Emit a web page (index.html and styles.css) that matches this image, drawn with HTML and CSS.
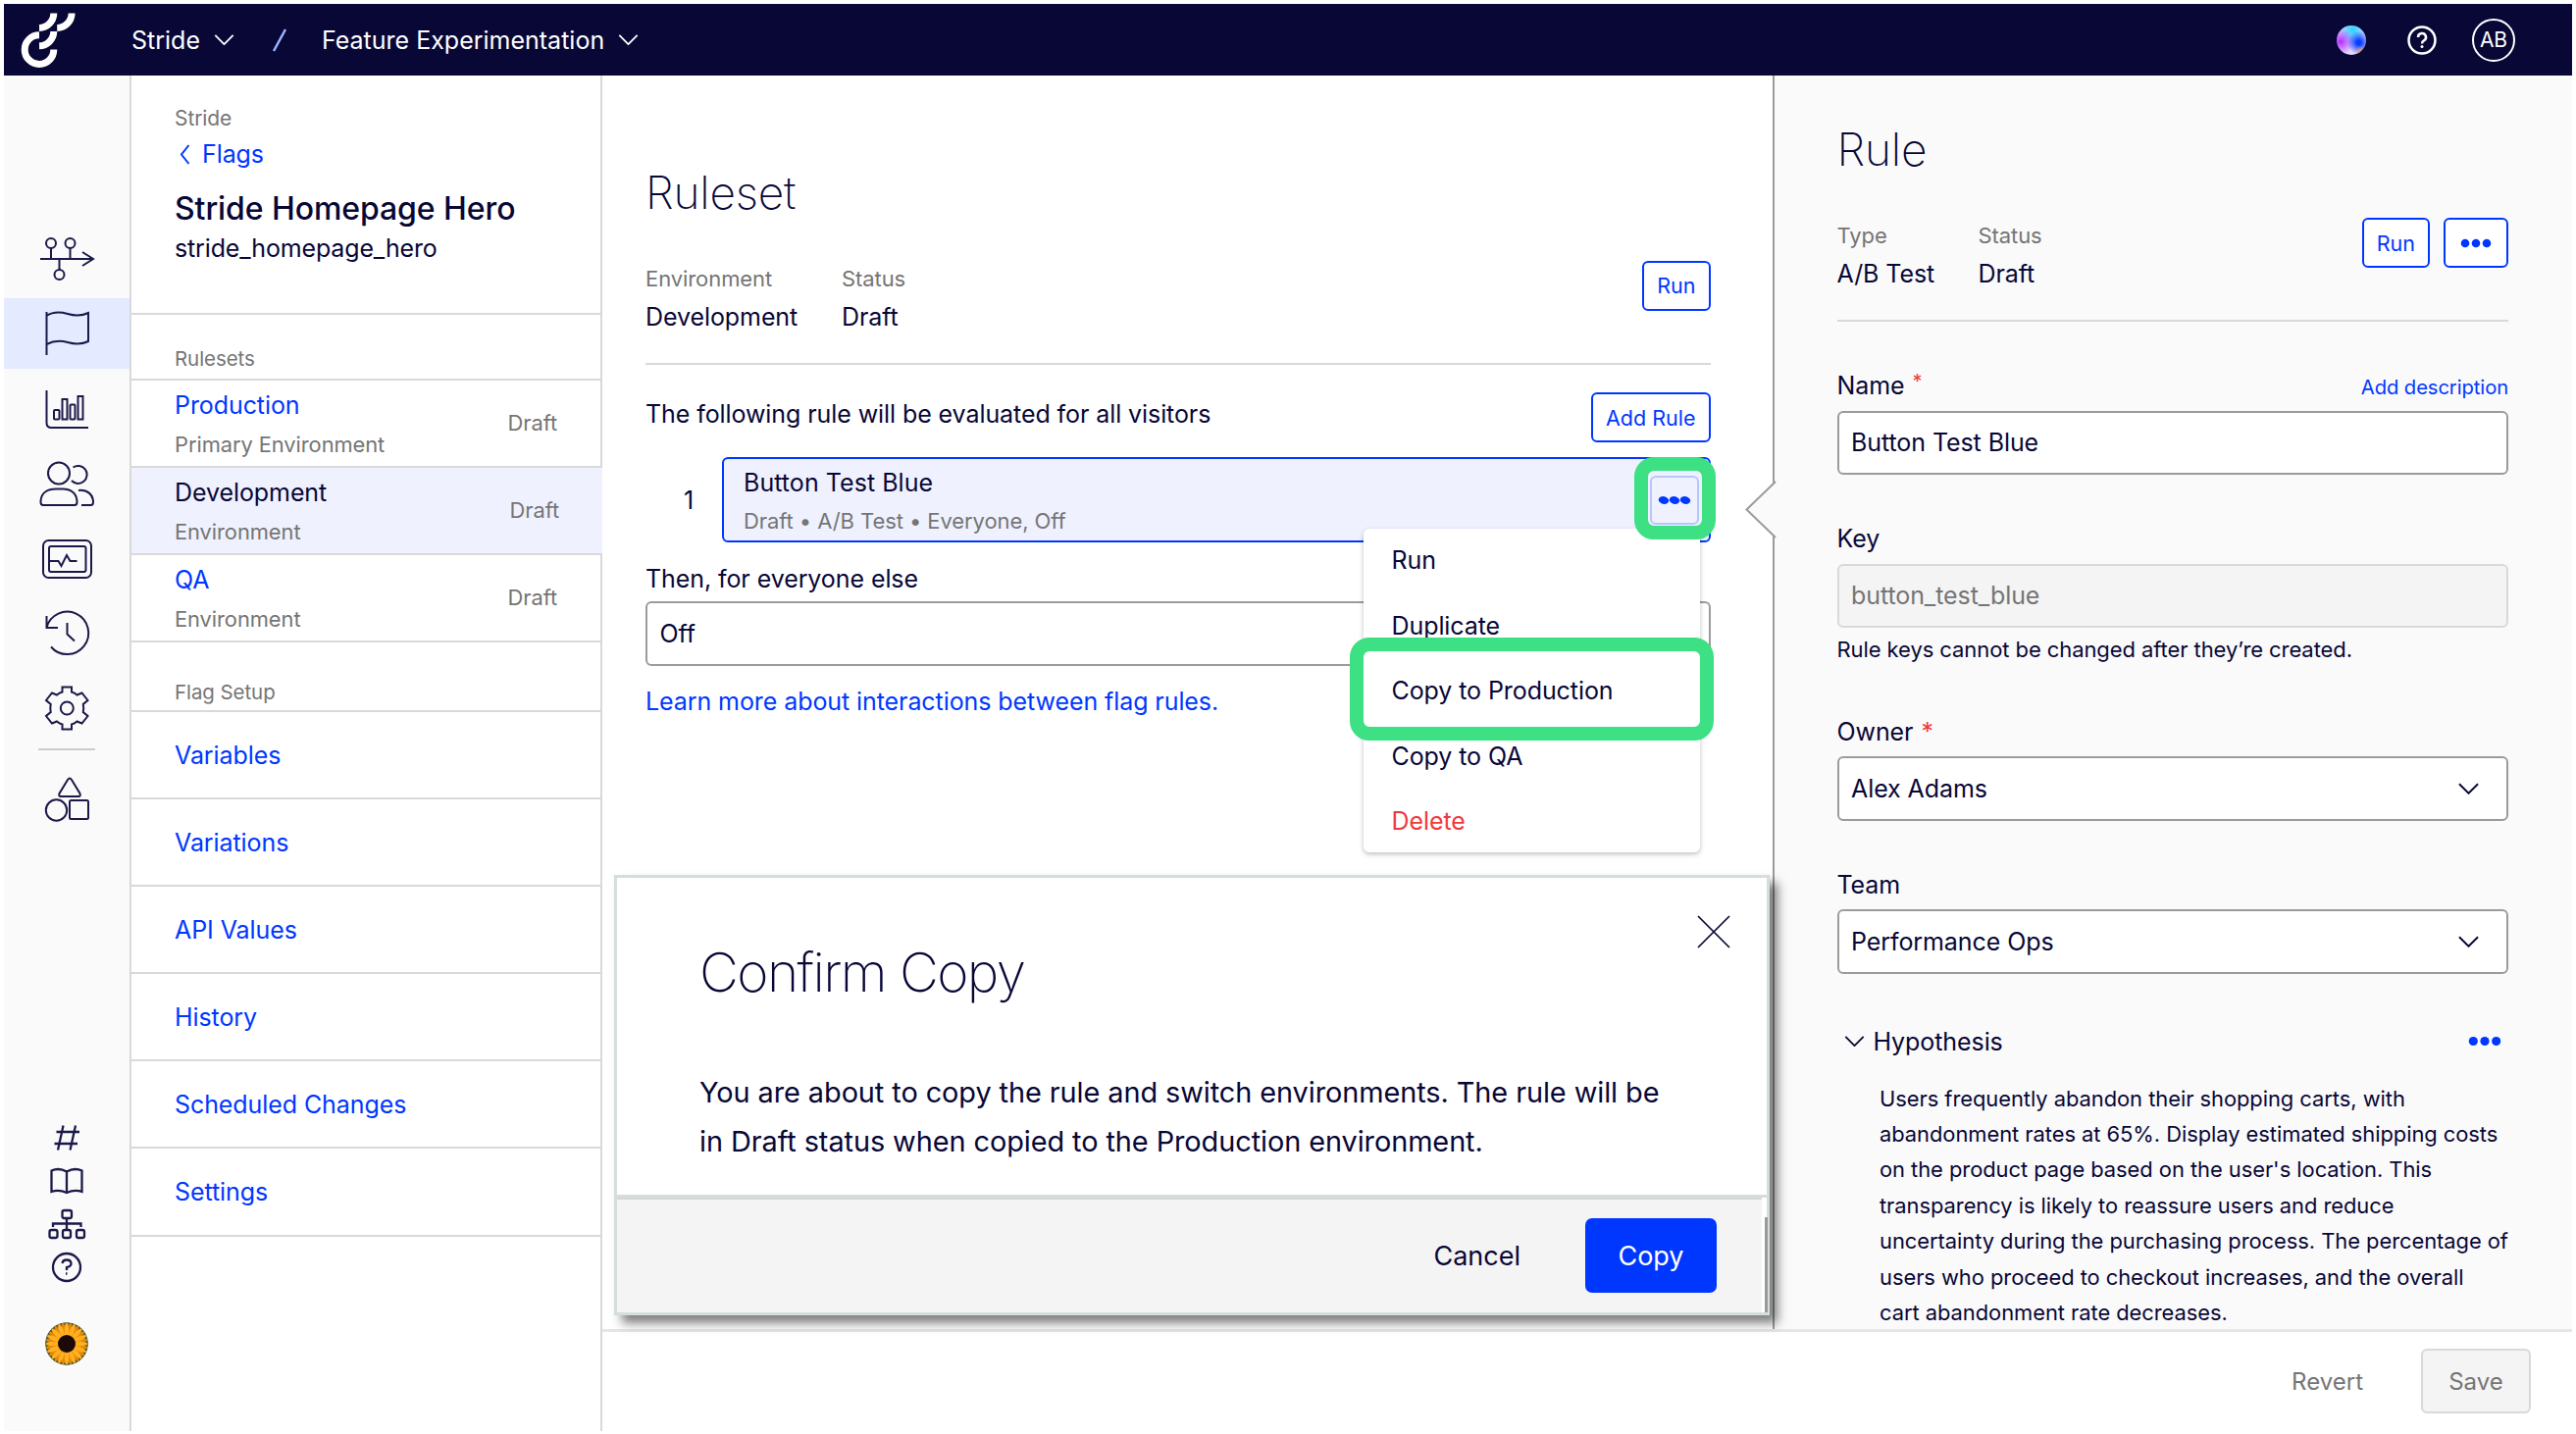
FILE: index.html
```html
<!DOCTYPE html>
<html lang="en">
<head>
    <meta charset="UTF-8">
    <meta name="viewport" content="width=device-width, initial-scale=1.0">
    <title>Stride Homepage Hero - Feature Experimentation</title>
    <link rel="stylesheet" href="styles.css">
</head>
<body>
    <!-- Shared icons -->
    <svg class="sprite" width="0" height="0">
        <symbol id="chevron" viewBox="0 0 22 12"><path d="M1 1 L11 11 L21 1"/></symbol>
        <symbol id="dots" viewBox="0 0 32 10"><circle cx="5" cy="5" r="4.3"/><circle cx="16" cy="5" r="4.3"/><circle cx="27" cy="5" r="4.3"/></symbol>
        <symbol id="petals" viewBox="-22 -22 44 44">
            <g id="petal4">
                <ellipse cx="0" cy="-14" rx="2.2" ry="7.5"/>
                <ellipse cx="0" cy="14" rx="2.2" ry="7.5"/>
                <ellipse cx="-14" cy="0" rx="7.5" ry="2.2"/>
                <ellipse cx="14" cy="0" rx="7.5" ry="2.2"/>
            </g>
            <use href="#petal4" transform="rotate(22.5)"/>
            <use href="#petal4" transform="rotate(45)"/>
            <use href="#petal4" transform="rotate(67.5)"/>
        </symbol>
    </svg>

    <div class="app">
        <header class="topbar">
            <svg class="logo" width="56" height="56" viewBox="20.5 12.2 56 56">
                <path d="M54.3 12.7 A15 15 0 0 1 39.5 27.6 M72.6 12.7 A15 15 0 0 1 57.7 27.6 M54.3 31.2 A15 15 0 0 1 39.5 46 M39.5 35 A14.8 14.8 0 1 0 54.3 49.7"/>
            </svg>
            <div class="crumb crumb-project">Stride <svg class="chevron" width="21" height="11"><use href="#chevron"/></svg></div>
            <svg class="slash" width="16" height="24" viewBox="0 0 16 24"><path d="M2 23 L14 1"/></svg>
            <div class="crumb">Feature Experimentation <svg class="chevron" width="21" height="11"><use href="#chevron"/></svg></div>
            <div class="topbar-right">
                <span class="orb"></span>
                <svg class="help" width="30" height="30" viewBox="0 0 30 30"><circle cx="15" cy="15" r="13.5"/><path d="M11 12 a4 4 0 1 1 6 3.4 q-2 1.1 -2 3"/><circle class="dot" cx="15" cy="21.5" r="1.5"/></svg>
                <span class="avatar">AB</span>
            </div>
        </header>

        <div class="layout">
            <!-- Icon rail -->
            <aside class="rail">
                <div class="rail-item">
                    <svg width="60" height="60" viewBox="0 0 60 60"><path d="M3 30 H57 M46 23 L57 30 L46 37 M14 19 V30 M33.5 19 V30 M22.5 30 V41"/><circle cx="14" cy="14" r="5"/><circle cx="33.5" cy="14" r="5"/><circle cx="22.5" cy="46" r="5"/></svg>
                </div>
                <div class="rail-item active">
                    <svg width="60" height="60" viewBox="0 0 60 60"><path d="M9.5 8 V52 M9.5 12 C17 7 24 8 31 10 C38 12 46 12 52 9 V38 C46 41 38 41 31 39 C24 37 17 37 9.5 41"/></svg>
                </div>
                <div class="rail-item">
                    <svg width="60" height="60" viewBox="0 0 60 60"><path d="M9.5 11 V44 Q9.5 49 14.5 49 H52"/><rect x="17" y="31" width="5.5" height="9.5" rx="1"/><rect x="25.5" y="20" width="5" height="20.5"/><rect x="33.5" y="25.5" width="5" height="15" rx="1"/><rect x="41.5" y="17" width="5" height="23.5"/></svg>
                </div>
                <div class="rail-item">
                    <svg width="60" height="60" viewBox="0 0 60 60"><circle cx="22" cy="19.5" r="11"/><path d="M6 52 H38 Q40.5 52 40.5 49 C40.5 39 33 35.5 26 35.5 H19 C11 35.5 3.5 39 3.5 49 Q3.5 52 6 52 Z M36.5 13.5 A9 9 0 1 1 35 27 M42 37 C51 36 57 41 57 49 Q57 52 54.5 52 H45"/></svg>
                </div>
                <div class="rail-item">
                    <svg width="60" height="60" viewBox="0 0 60 60"><rect x="6" y="11" width="49" height="38" rx="5.5"/><rect x="12" y="17" width="37.5" height="26" rx="2"/><path d="M12 32 H21.5 L24.5 37 L30 26 L33.5 32 H40.5"/></svg>
                </div>
                <div class="rail-item">
                    <svg width="60" height="60" viewBox="0 0 60 60"><path d="M9.5 12 V24 H21 M9.5 24 A21.7 21.7 0 1 1 14 43.5 M30.5 19 V30.5 L38 37.5"/></svg>
                </div>
                <div class="rail-item">
                    <svg width="60" height="60" viewBox="0 0 60 60"><path d="M25.5 8.5 H35 V13.5 Q38 14.4 40.5 16.5 L45.5 14.5 L51.5 22 L46.8 26 Q47.6 30 46.8 34 L51.5 38 L45.5 45.5 L40.5 43.5 Q38 45.6 35 46.5 V51.5 H25.5 V46.5 Q22.5 45.6 20 43.5 L15 45.5 L9 38 L13.7 34 Q12.9 30 13.7 26 L9 22 L15 14.5 L20 16.5 Q22.5 14.4 25.5 13.5 Z"/><circle cx="30.3" cy="30" r="6.5"/></svg>
                </div>
                <div class="rail-divider"></div>
                <div class="rail-item rail-item-shapes">
                    <svg width="60" height="60" viewBox="0 0 60 60"><path d="M31 11 Q33 8 35 11 L43.5 25 Q44.5 28 42 28 H24 Q21.5 28 22.5 25 Z"/><circle cx="19.5" cy="42" r="10.7"/><rect x="33" y="32" width="19" height="19" rx="1.5"/></svg>
                </div>

                <div class="rail-bottom">
                    <svg width="44" height="44" viewBox="0 0 44 44"><path d="M18.5 9.5 L13 34.5 M31 9.5 L25.5 34.5 M11.5 16 H35 M9.5 28 H33"/></svg>
                    <svg width="44" height="44" viewBox="0 0 44 44"><path d="M22 12.5 Q14 8 6.5 11.5 V33 Q14 30.5 22 34 Q30 30.5 37.5 33 V11.5 Q30 8 22 12.5 V34"/></svg>
                    <svg width="44" height="44" viewBox="0 0 44 44"><rect x="17.5" y="8" width="9.5" height="8" rx="2"/><path d="M22 16 V28 M8 25 V21.5 H36.5 V25"/><rect x="4.5" y="28" width="8" height="8" rx="2"/><rect x="18" y="28" width="8" height="8" rx="2"/><rect x="32" y="28" width="8" height="8" rx="2"/></svg>
                    <svg width="44" height="44" viewBox="0 0 44 44"><circle cx="22" cy="22" r="14"/><path d="M17.5 18 Q18 14.5 22 14.5 Q26.5 14.5 26.5 18.5 Q26.5 21 22 22 V25"/><path d="M21 28.5 h1.5"/></svg>
                </div>
                <svg class="sunflower" width="44" height="44" viewBox="-22 -22 44 44">
                    <circle class="leaf" r="22"/>
                    <circle class="ground" r="15"/>
                    <use href="#petals" class="petals-back" x="-22" y="-22" width="44" height="44" transform="rotate(11)"/>
                    <use href="#petals" class="petals-front" x="-22" y="-22" width="44" height="44"/>
                    <circle class="seed" r="9"/>
                </svg>
            </aside>

            <!-- Flag navigation -->
            <nav class="sidenav">
                <div class="flag-header">
                    <div class="project">Stride</div>
                    <a class="back"><svg width="11" height="21" viewBox="0 0 11 21"><path d="M9.5 1 L2 10.5 L9.5 20"/></svg>Flags</a>
                    <h2>Stride Homepage Hero</h2>
                    <div class="slug">stride_homepage_hero</div>
                </div>
                <div class="nav-label">Rulesets</div>
                <div class="nav-env">
                    <div><a>Production</a><span class="sub">Primary Environment</span></div>
                    <span class="state">Draft</span>
                </div>
                <div class="nav-env selected">
                    <div><a>Development</a><span class="sub">Environment</span></div>
                    <span class="state">Draft</span>
                </div>
                <div class="nav-env">
                    <div><a>QA</a><span class="sub">Environment</span></div>
                    <span class="state">Draft</span>
                </div>
                <div class="nav-label nav-label-setup">Flag Setup</div>
                <a class="nav-link">Variables</a>
                <a class="nav-link">Variations</a>
                <a class="nav-link">API Values</a>
                <a class="nav-link">History</a>
                <a class="nav-link">Scheduled Changes</a>
                <a class="nav-link">Settings</a>
            </nav>

            <div class="workspace">
                <div class="columns">
                    <main class="ruleset">
                        <h1>Ruleset</h1>
                        <div class="meta">
                            <div class="meta-col"><span class="meta-label">Environment</span><span class="meta-value">Development</span></div>
                            <div class="meta-col"><span class="meta-label">Status</span><span class="meta-value">Draft</span></div>
                            <button class="btn-outline">Run</button>
                        </div>
                        <div class="rules-head">
                            <p>The following rule will be evaluated for all visitors</p>
                            <button class="btn-outline">Add Rule</button>
                        </div>
                        <div class="rule-row">
                            <span class="rule-number">1</span>
                            <div class="rule-card">
                                <div class="rule-name">Button Test Blue</div>
                                <div class="rule-info">Draft • A/B Test • Everyone, Off</div>
                                <button class="rule-more">
                                    <svg width="34" height="12" viewBox="0 0 34 12"><ellipse cx="6" cy="6" rx="5.3" ry="3.8" transform="rotate(12 6 6)"/><ellipse cx="17" cy="6" rx="5.3" ry="3.8" transform="rotate(12 17 6)"/><ellipse cx="28" cy="6" rx="5.3" ry="3.8" transform="rotate(12 28 6)"/></svg>
                                </button>
                                <div class="menu">
                                    <div class="menu-item">Run</div>
                                    <div class="menu-item">Duplicate</div>
                                    <div class="menu-item">Copy to Production</div>
                                    <div class="menu-item">Copy to QA</div>
                                    <div class="menu-item danger">Delete</div>
                                </div>
                                <div class="highlight highlight-more"></div>
                                <div class="highlight highlight-copy"></div>
                            </div>
                        </div>
                        <p class="else-label">Then, for everyone else</p>
                        <div class="field else-field">Off</div>
                        <a class="learn">Learn more about interactions between flag rules.</a>
                    </main>

                    <section class="rule-panel">
                        <svg class="notch" width="32" height="60" viewBox="0 0 32 60"><path d="M31 1 L1.5 29.5 L31 58"/></svg>
                        <h1>Rule</h1>
                        <div class="meta">
                            <div class="meta-col"><span class="meta-label">Type</span><span class="meta-value">A/B Test</span></div>
                            <div class="meta-col"><span class="meta-label">Status</span><span class="meta-value">Draft</span></div>
                            <button class="btn-outline">Run</button>
                            <button class="btn-outline btn-dots"><svg width="32" height="10"><use href="#dots"/></svg></button>
                        </div>

                        <div class="form-group">
                            <label>Name <sup>*</sup><a class="add-description">Add description</a></label>
                            <div class="field">Button Test Blue</div>
                        </div>
                        <div class="form-group">
                            <label>Key</label>
                            <div class="field disabled">button_test_blue</div>
                            <div class="hint">Rule keys cannot be changed after they’re created.</div>
                        </div>
                        <div class="form-group owner">
                            <label>Owner <span class="star">*</span></label>
                            <div class="field">Alex Adams <svg class="chevron" width="21" height="12"><use href="#chevron"/></svg></div>
                        </div>
                        <div class="form-group">
                            <label>Team</label>
                            <div class="field">Performance Ops <svg class="chevron" width="21" height="12"><use href="#chevron"/></svg></div>
                        </div>

                        <div class="hypothesis-head">
                            <svg class="chevron" width="21" height="11"><use href="#chevron"/></svg>
                            <span>Hypothesis</span>
                            <svg class="dots" width="34" height="11"><use href="#dots"/></svg>
                        </div>
                        <p class="hypothesis">Users frequently abandon their shopping carts, with<br>
                            abandonment rates at 65%. Display estimated shipping costs<br>
                            on the product page based on the user's location. This<br>
                            transparency is likely to reassure users and reduce<br>
                            uncertainty during the purchasing process. The percentage of<br>
                            users who proceed to checkout increases, and the overall<br>
                            cart abandonment rate decreases.</p>
                    </section>
                </div>

                <footer class="savebar">
                    <button class="btn-plain">Revert</button>
                    <button class="btn-save">Save</button>
                </footer>
            </div>
        </div>

        <!-- Copy confirmation -->
        <div class="dialog">
            <div class="dialog-body">
                <svg class="close" width="34" height="34" viewBox="0 0 34 34"><path d="M1 1 L33 33 M33 1 L1 33"/></svg>
                <h1>Confirm Copy</h1>
                <p>You are about to copy the rule and switch environments. The rule will be<br>in Draft status when copied to the Production environment.</p>
            </div>
            <div class="dialog-footer">
                <button class="btn-cancel">Cancel</button>
                <button class="btn-primary">Copy</button>
                <span class="dialog-scroll"></span>
            </div>
        </div>
    </div>
</body>
</html>
```

FILE: styles.css
```css
:root {
    --navy: #080736;
    --blue: #0037ff;
    --grey: #757575;
    --line: #d9d9d9;
    --field-line: #9b9b9b;
    --panel: #fafafa;
    --selected: #eff1fe;
    --green: #3de083;
    --red: #f03a3a;
}

* {
    box-sizing: border-box;
}

body {
    margin: 0;
    background: #fff;
    color: var(--navy);
    font-family: Inter, 'Liberation Sans', sans-serif;
    font-size: 25px;
    letter-spacing: -0.08px;
    overflow: hidden;
}

h1, h2, p {
    margin: 0;
}

h1 {
    font-size: 46px;
    font-weight: 250;
    letter-spacing: -0.2px;
    line-height: 60px;
}

a {
    color: var(--blue);
    text-decoration: none;
}

button {
    font-family: inherit;
    padding: 0;
    color: inherit;
}

svg {
    display: block;
    fill: none;
    flex: none;
}

.sprite {
    position: absolute;
}

.app {
    position: relative;
    display: flex;
    flex-direction: column;
    width: 2618px;
    height: 1455px;
    margin: 4px;
}

/* Top bar */
.topbar {
    display: flex;
    align-items: center;
    height: 73px;
    padding: 0 58px 0 17px;
    background: var(--navy);
    color: #fff;
    flex: none;
}

.logo {
    stroke: #fff;
    stroke-width: 7;
    margin-right: 57px;
}

.crumb {
    display: flex;
    align-items: center;
    gap: 14px;
    letter-spacing: 0;
}

.crumb-project {
    margin-right: 38px;
}

.chevron {
    stroke: var(--navy);
    stroke-width: 2;
}

.crumb .chevron {
    stroke: #fff;
}

.slash {
    stroke: #9db4ff;
    stroke-width: 2.5;
    margin-right: 35px;
}

.topbar-right {
    display: flex;
    align-items: center;
    margin-left: auto;
}

.orb {
    width: 30px;
    height: 30px;
    border-radius: 50%;
    margin-right: 42px;
    background:
        radial-gradient(circle at 85% 92%, #ff9a3c 0, transparent 18%),
        radial-gradient(circle at 75% 58%, #0a3cff 0 8%, transparent 42%),
        radial-gradient(circle at 14% 55%, #b42cff 0, transparent 45%),
        radial-gradient(circle at 55% 15%, #27d3ff 0, transparent 50%),
        #e6d9ff;
}

.help {
    stroke: #fff;
    stroke-width: 2.5;
    margin-right: 36px;
}

.help .dot {
    fill: #fff;
    stroke: none;
}

.avatar {
    width: 44px;
    height: 44px;
    border: 2.5px solid #fff;
    border-radius: 50%;
    font-size: 21px;
    line-height: 39px;
    text-align: center;
}

.layout {
    display: flex;
    flex: 1;
    min-height: 0;
}

/* Icon rail */
.rail {
    display: flex;
    flex-direction: column;
    align-items: center;
    width: 130px;
    padding-top: 151px;
    border-right: 2px solid var(--line);
    background: var(--panel);
    flex: none;
}

.rail svg {
    stroke: #1b1949;
    stroke-width: 2;
}

.rail-item {
    display: flex;
    align-items: center;
    justify-content: center;
    width: 100%;
    height: 72px;
    margin-bottom: 4.4px;
    flex: none;
}

.rail-item.active {
    background: #e4eaff;
}

.rail-divider {
    width: 58px;
    height: 2px;
    background: #ccc;
}

.rail-item-shapes {
    margin: 13px 0 0;
}

.rail-bottom {
    margin-top: 288px;
}

.rail .rail-bottom svg {
    stroke-width: 2.3;
}

.rail .sunflower {
    margin-top: 34px;
    border-radius: 50%;
    stroke: none;
}

.leaf { fill: #4d5a35; }
.ground { fill: #e07c00; }
.petals-back { fill: #e88608; }
.petals-front { fill: #ffb01e; }
.seed { fill: #1d0a08; }

/* Flag navigation */
.sidenav {
    width: 480px;
    border-right: 2px solid var(--line);
    flex: none;
}

.flag-header {
    height: 244px;
    padding: 29px 0 0 44px;
    border-bottom: 2px solid var(--line);
}

.project {
    color: var(--grey);
    font-size: 21px;
    line-height: 30px;
}

.back {
    display: flex;
    align-items: center;
    gap: 12px;
    padding-left: 5px;
    line-height: 43px;
}

.back svg {
    stroke: var(--blue);
    stroke-width: 2;
}

.flag-header h2 {
    margin-top: 10px;
    font-size: 32px;
    font-weight: 500;
    line-height: 48px;
}

.slug {
    letter-spacing: -0.15px;
    line-height: 33px;
}

.nav-label {
    display: flex;
    align-items: flex-end;
    height: 67px;
    padding: 0 0 7px 44px;
    border-bottom: 2px solid var(--line);
    color: var(--grey);
    font-size: 20.5px;
    line-height: 26px;
}

.nav-label-setup {
    height: 71px;
    padding-bottom: 5px;
}

.nav-env {
    display: flex;
    justify-content: space-between;
    height: 89px;
    padding: 8px 44px 0 44px;
    border-bottom: 2px solid var(--line);
}

.nav-env a {
    display: block;
    line-height: 35px;
}

.nav-env .sub {
    display: block;
    margin-top: 7px;
}

.nav-env .sub,
.nav-env .state {
    color: var(--grey);
    font-size: 21.9px;
    line-height: 30px;
}

.nav-env .state {
    margin-top: 20px;
}

.nav-env.selected {
    margin-right: -2px;
    background: var(--selected);
}

.nav-env.selected a {
    color: var(--navy);
}

.nav-link {
    display: flex;
    align-items: center;
    height: 89.1px;
    padding-left: 44px;
    border-bottom: 2px solid var(--line);
}

/* Main area */
.workspace {
    display: flex;
    flex-direction: column;
    flex: 1;
    min-width: 0;
}

.columns {
    display: flex;
    height: 1278px;
    flex: none;
}

.ruleset {
    width: 1193px;
    padding: 89px 63.5px 0 44px;
    flex: none;
}

.meta {
    display: flex;
    margin-top: 42.5px;
    padding-bottom: 29px;
    border-bottom: 2px solid var(--line);
}

.meta-col {
    width: 200px;
}

.meta-label,
.meta-value {
    display: block;
}

.meta-label {
    color: var(--grey);
    font-size: 22px;
    line-height: 30px;
}

.meta-value {
    margin-top: 6px;
    line-height: 36px;
}

.btn-outline {
    height: 51px;
    padding: 0 13px;
    border: 2px solid var(--blue);
    border-radius: 6px;
    background: #fff;
    color: var(--blue);
    font-size: 21.5px;
}

.meta .btn-outline {
    margin: -3px 0 0 auto;
}

.meta .btn-dots {
    display: flex;
    align-items: center;
    width: 66px;
    padding: 0 15px;
    margin-left: 14px;
}

.btn-dots svg,
.dots {
    fill: var(--blue);
}

.rules-head {
    display: flex;
    align-items: center;
    justify-content: space-between;
    height: 50px;
    margin-top: 29px;
}

.rules-head p {
    padding-bottom: 7px;
}

.rule-row {
    display: flex;
    height: 87px;
    margin-top: 15.5px;
}

.rule-number {
    width: 78px;
    padding-left: 39px;
    line-height: 88px;
}

.rule-card {
    position: relative;
    flex: 1;
    padding: 7px 20px 0;
    border: 2px solid var(--blue);
    border-radius: 6px;
    background: var(--selected);
}

.rule-name {
    letter-spacing: 0.05px;
    line-height: 34px;
}

.rule-info {
    margin-top: 7px;
    color: var(--grey);
    font-size: 22px;
    line-height: 30px;
}

.rule-more {
    position: absolute;
    right: 10px;
    top: 17px;
    display: flex;
    align-items: center;
    justify-content: center;
    width: 50px;
    height: 50px;
    border: 2px solid #b8c7fb;
    border-radius: 6px;
    background: var(--selected);
}

.rule-more svg {
    fill: var(--blue);
}

.menu {
    position: absolute;
    top: 71px;
    right: 9px;
    width: 343px;
    height: 330px;
    border-radius: 6px;
    background: #fff;
    box-shadow: 0 2px 5px rgba(0, 0, 0, 0.25);
}

.menu-item {
    height: 66.5px;
    padding-left: 29px;
    line-height: 64px;
}

.menu-item.danger {
    color: var(--red);
}

/* Callout frames over the menu */
.highlight {
    position: absolute;
    border: 14px solid var(--green);
    border-radius: 20px;
}

.highlight-more {
    top: -2px;
    right: -7px;
    width: 83px;
    height: 84px;
}

.highlight-copy {
    top: 182px;
    right: -5px;
    width: 371px;
    height: 105px;
}

.else-label {
    margin-top: 19px;
    line-height: 36px;
}

.field {
    display: flex;
    align-items: center;
    justify-content: space-between;
    height: 65.5px;
    padding: 0 28px 0 12.5px;
    border: 2px solid var(--field-line);
    border-radius: 6px;
    background: #fff;
}

.else-field {
    margin-top: 5px;
}

.learn {
    display: block;
    margin-top: 18px;
    line-height: 37px;
}

/* Rule details */
.rule-panel {
    position: relative;
    flex: 1;
    padding: 45px 65px 0 63.5px;
    border-left: 2px solid var(--field-line);
    background: var(--panel);
}

.notch {
    position: absolute;
    left: -30px;
    top: 413px;
    fill: var(--panel);
    stroke: var(--field-line);
    stroke-width: 2;
}

.rule-panel .meta {
    margin-top: 43px;
}

.rule-panel .meta-col {
    width: 144px;
}

.form-group {
    margin-top: 47px;
}

.form-group label {
    display: flex;
    height: 36px;
    margin-bottom: 7.5px;
    line-height: 37px;
}

.form-group sup {
    margin-left: 8px;
    color: var(--red);
    font-size: 20px;
    line-height: 28px;
}

.star {
    margin-left: 8px;
    color: var(--red);
}

.add-description {
    margin-left: auto;
    font-size: 20.2px;
    line-height: 40px;
}

.field.disabled {
    border-color: var(--line);
    background: #f4f4f4;
    color: var(--grey);
}

.hint {
    margin-top: 6.5px;
    font-size: 22px;
    line-height: 30px;
}

.form-group.owner {
    margin-top: 51px;
}

.hypothesis-head {
    display: flex;
    align-items: center;
    margin-top: 51px;
    padding: 0 7px 0 7px;
    line-height: 36px;
}

.hypothesis-head span {
    margin-left: 9px;
}

.hypothesis-head .dots {
    margin-left: auto;
}

.hypothesis {
    margin: 22px 0 0 43.5px;
    font-size: 21.9px;
    letter-spacing: -0.04px;
    line-height: 36.4px;
    white-space: nowrap;
}

.savebar {
    display: flex;
    justify-content: flex-end;
    flex: 1;
    padding: 17px 42px 0 0;
    border-top: 3px solid #e6e6e6;
}

.btn-plain,
.btn-save {
    height: 66px;
    color: var(--grey);
    font-size: 24px;
}

.btn-plain {
    border: 0;
    background: none;
    margin-right: 59px;
}

.btn-save {
    width: 112px;
    border: 2px solid var(--line);
    border-radius: 6px;
    background: #f4f4f4;
}

/* Dialog */
.dialog {
    position: absolute;
    left: 622px;
    top: 888px;
    width: 1178px;
    height: 449px;
    border: 3px solid #d5dedd;
    background: #fff;
    box-shadow: 8px 8px 10px rgba(0, 0, 0, 0.5);
}

.dialog-body {
    position: relative;
    height: 326px;
    padding: 66px 0 0 84px;
    border-bottom: 3px solid #d5dedd;
}

.dialog-body h1 {
    font-size: 55px;
    font-weight: 200;
    letter-spacing: -1.6px;
}

.dialog-body p {
    margin-top: 67.5px;
    font-size: 28.9px;
    line-height: 50px;
    white-space: nowrap;
}

.close {
    position: absolute;
    right: 37px;
    top: 38px;
    stroke: var(--navy);
    stroke-width: 1.7;
}

.dialog-footer {
    position: relative;
    display: flex;
    align-items: flex-start;
    justify-content: flex-end;
    height: 117px;
    margin-right: 5px;
    padding: 21px 46px 0 0;
    background: #f4f4f4;
    box-shadow: inset 0 2px 0 #d6d6d6;
}

.btn-cancel,
.btn-primary {
    height: 76px;
    border: 0;
    font-size: 27px;
}

.btn-cancel {
    margin-right: 66px;
    background: none;
}

.btn-primary {
    width: 134px;
    border-radius: 7px;
    background: var(--blue);
    color: #fff;
}

.dialog-scroll {
    position: absolute;
    right: -6px;
    top: 20px;
    bottom: 0;
    width: 3px;
    background: #999;
}
```
